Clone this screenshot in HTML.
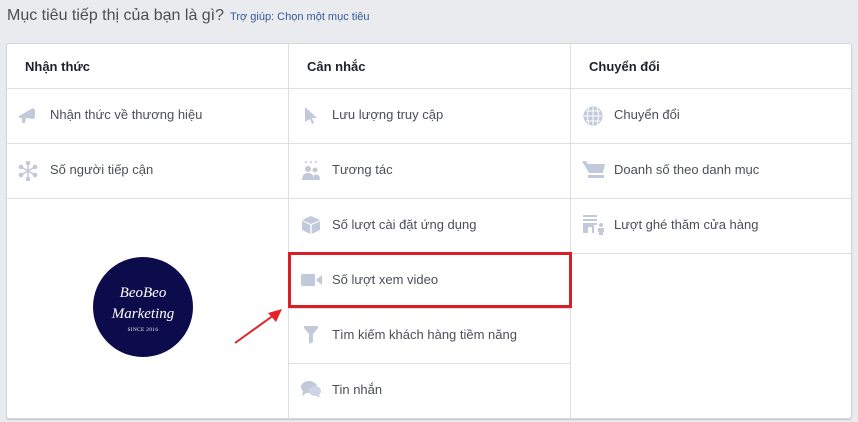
<!DOCTYPE html>
<html><head><meta charset="utf-8"><style>
*{margin:0;padding:0;box-sizing:border-box}
body{width:858px;height:422px;background:#e9ebee;font-family:"Liberation Sans",Arial,sans-serif;position:relative;overflow:hidden}
.t{position:absolute;left:7px;top:7px;font-size:16px;color:#4b4f56}
.t small{font-size:11px;color:#365899;margin-left:6px}
.card{position:absolute;left:6px;top:43px;width:846px;height:376px;background:#fff;border:1px solid #d3d6db;border-radius:3px;box-shadow:0 1px 1px rgba(0,0,0,.15)}
.v{position:absolute;top:43px;width:1px;background:#dddfe2}
.h{position:absolute;height:1px;background:#dddfe2}
.hd{position:absolute;top:59px;font-size:13px;font-weight:bold;color:#1d2129}
.it{position:absolute;font-size:13px;color:#4b4f56;height:16px;line-height:16px}
.ic{position:absolute}
</style></head><body>
<div class="t">Mục tiêu tiếp thị của bạn là gì?<small>Trợ giúp: Chọn một mục tiêu</small></div>
<div class="card"></div>
<div class="v" style="left:288px;height:376px"></div>
<div class="v" style="left:570px;height:376px"></div>
<div class="h" style="left:7px;width:844px;top:88px"></div>
<div class="h" style="left:7px;width:844px;top:143px"></div>
<div class="h" style="left:7px;width:844px;top:198px"></div>
<div class="h" style="left:289px;width:562px;top:253px"></div>
<div class="h" style="left:289px;width:281px;top:308px"></div>
<div class="h" style="left:289px;width:281px;top:363px"></div>
<div class="hd" style="left:25px">Nhận thức</div>
<div class="hd" style="left:307px">Cân nhắc</div>
<div class="hd" style="left:589px">Chuyển đổi</div>

<svg class="ic" style="left:18px;top:105px" width="22" height="20" viewBox="0 0 22 20" fill="#c2c9db"><path d="M1 11 L15 3 L17 5 L17 13 L15 14 L8 13 L7 18 L4 18 L4 13 L1 13Z"/></svg>
<div class="it" style="left:50px;top:107px">Nhận thức về thương hiệu</div>
<svg class="ic" style="left:18px;top:161px" width="20" height="20" viewBox="0 0 20 20" stroke="#c2c9db" stroke-width="1.5" fill="#c2c9db"><path d="M10 2V18M3 6L17 14M3 14L17 6"/><circle cx="10" cy="2" r="1.6"/><circle cx="10" cy="18" r="1.6"/><circle cx="3" cy="6" r="1.6"/><circle cx="17" cy="14" r="1.6"/><circle cx="3" cy="14" r="1.6"/><circle cx="17" cy="6" r="1.6"/></svg>
<div class="it" style="left:50px;top:162px">Số người tiếp cận</div>

<svg class="ic" style="left:303px;top:106px" width="16" height="20" viewBox="0 0 16 20" fill="#c2c9db"><path d="M2 1 L14 12 L9 12 L11 17 L9 18 L7 13 L2 16Z"/></svg>
<div class="it" style="left:332px;top:107px">Lưu lượng truy cập</div>
<svg class="ic" style="left:301px;top:160px" width="20" height="22" viewBox="0 0 20 22" fill="#c2c9db"><circle cx="5" cy="2" r="1"/><circle cx="10" cy="2" r="1"/><circle cx="15" cy="2" r="1"/><circle cx="7" cy="9" r="3"/><circle cx="14" cy="10" r="2.5"/><path d="M1 20 Q1 13 7 13 Q13 13 13 20Z"/><path d="M13 20 L13 15 Q19 13 19 20Z"/></svg>
<div class="it" style="left:332px;top:162px">Tương tác</div>
<svg class="ic" style="left:301px;top:215px" width="20" height="20" viewBox="0 0 20 20" fill="#c2c9db"><path d="M10 1 L19 5 L10 9 L1 5Z"/><path d="M1 6 L9.3 10 L9.3 19 L1 15Z"/><path d="M19 6 L10.7 10 L10.7 19 L19 15Z"/></svg>
<div class="it" style="left:332px;top:217px">Số lượt cài đặt ứng dụng</div>
<svg class="ic" style="left:301px;top:273px" width="21" height="14" viewBox="0 0 21 14" fill="#c2c9db"><rect x="0" y="1" width="14" height="12" rx="1"/><path d="M15 7 L21 2 L21 12Z"/></svg>
<div class="it" style="left:332px;top:272px">Số lượt xem video</div>
<svg class="ic" style="left:303px;top:325px" width="16" height="20" viewBox="0 0 16 20" fill="#c2c9db"><path d="M1 1 H15 V3 L10 9 V17 L6 19 V9 L1 3Z"/></svg>
<div class="it" style="left:332px;top:327px">Tìm kiếm khách hàng tiềm năng</div>
<svg class="ic" style="left:300px;top:380px" width="22" height="20" viewBox="0 0 22 20" fill="#c2c9db"><ellipse cx="9" cy="7" rx="8" ry="6"/><path d="M3 11 L2 16 L8 12Z"/><ellipse cx="15" cy="11" rx="6" ry="5" fill="#ced4e3"/><path d="M18 14 L21 18 L14 15Z" fill="#ced4e3"/></svg>
<div class="it" style="left:332px;top:382px">Tin nhắn</div>

<svg class="ic" style="left:583px;top:106px" width="20" height="20" viewBox="0 0 20 20" fill="none" stroke="#c2c9db"><circle cx="10" cy="10" r="9" fill="#c2c9db"/><path d="M1 10H19M10 1V19M3 5H17M3 15H17M6 2Q3 10 6 18M14 2Q17 10 14 18" stroke="#fff" stroke-width="1"/></svg>
<div class="it" style="left:614px;top:107px">Chuyển đổi</div>
<svg class="ic" style="left:582px;top:160px" width="24" height="20" viewBox="0 0 24 20" fill="#c2c9db"><path d="M0 1 H4 L6 4 H23 L21 13 H7Z"/><rect x="6" y="15" width="16" height="3"/></svg>
<div class="it" style="left:614px;top:162px">Doanh số theo danh mục</div>
<svg class="ic" style="left:583px;top:215px" width="22" height="20" viewBox="0 0 22 20" fill="#c2c9db"><rect x="0" y="0" width="14" height="2"/><rect x="0" y="4" width="14" height="2"/><path d="M0 8H14V10H11V18H9V12H5V18H0Z"/><circle cx="18" cy="10" r="2"/><path d="M15 13H21V17H20V20H16V17H15Z"/></svg>
<div class="it" style="left:614px;top:217px">Lượt ghé thăm cửa hàng</div>

<div style="position:absolute;left:288px;top:252px;width:284px;height:56px;border:3px solid #d81e27"></div>

<svg class="ic" style="left:90px;top:255px" width="106" height="106" viewBox="0 0 106 106"><circle cx="53" cy="52" r="50" fill="#0c0c4d"/>
<text x="53" y="42" text-anchor="middle" font-family="Liberation Serif,serif" font-style="italic" font-size="15" fill="#fff">BeoBeo</text>
<text x="53" y="63" text-anchor="middle" font-family="Liberation Serif,serif" font-style="italic" font-size="15" fill="#fff">Marketing</text>
<text x="53" y="76" text-anchor="middle" font-family="Liberation Serif,serif" font-size="5" fill="#fff" letter-spacing="0.5">SINCE 2016</text></svg>

<svg class="ic" style="left:230px;top:302px" width="60" height="46" viewBox="0 0 60 46"><path d="M5 41 L44 13" stroke="#e3242b" stroke-width="2"/><path d="M52 7 L38 11 L46 20Z" fill="#e3242b"/></svg>
</body></html>
